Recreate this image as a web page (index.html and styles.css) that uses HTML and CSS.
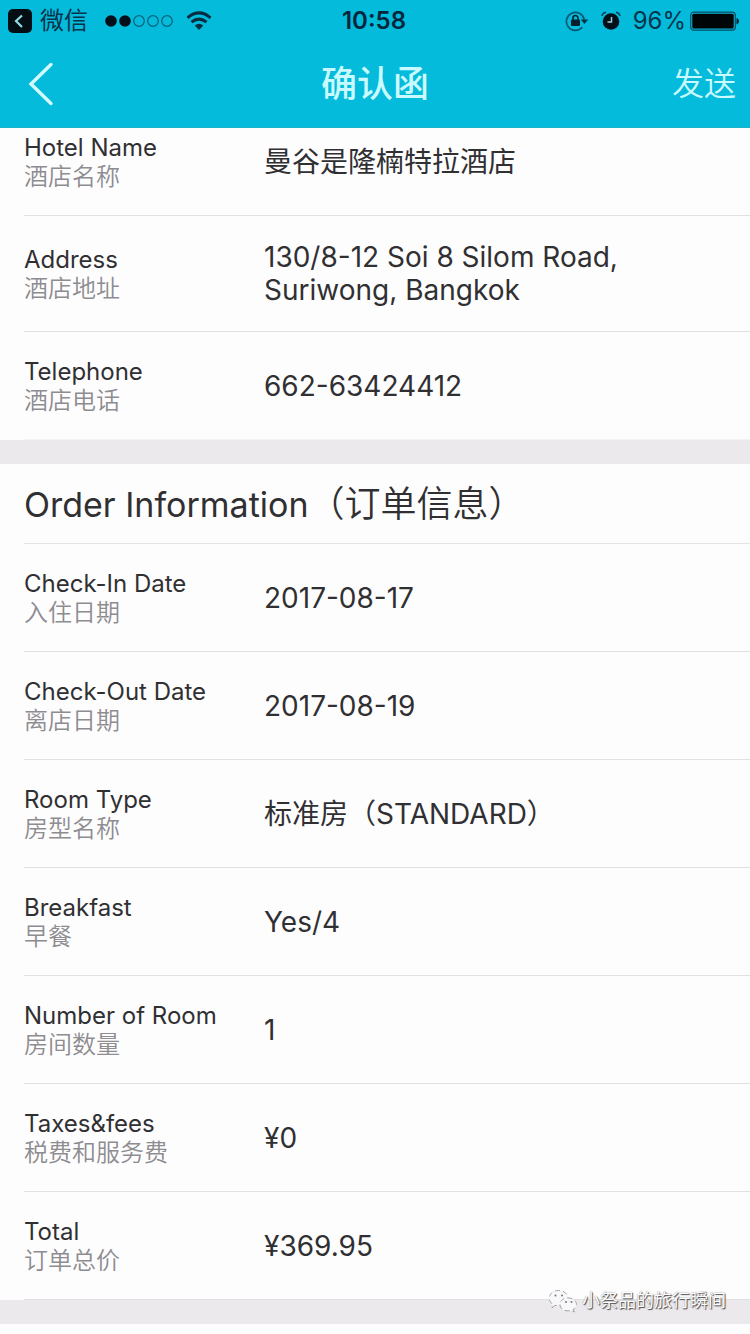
FILE: index.html
```html
<!DOCTYPE html>
<html lang="zh-CN">
<head>
<meta charset="utf-8">
<meta name="viewport" content="width=device-width, initial-scale=1">
<title>确认函</title>
<link rel="stylesheet" href="styles.css">
</head>
<body>
<div class="screen">
  <header class="header">
    <div class="status">
      <div class="status-left">
        <svg class="icon" width="24" height="24" viewBox="0 0 24 24"><rect width="24" height="24" rx="5" fill="#020d14"/><path d="M14 6.500L8 12l6 6" fill="none" stroke="#8fdde2" stroke-width="2.200"/></svg>
        <span class="carrier">微信</span>
        <svg class="icon dots" width="70" height="14" viewBox="0 0 70 14"><g fill="#031019"><circle cx="7" cy="7" r="5.800"/><circle cx="21" cy="7" r="5.800"/></g><g fill="none" stroke="#075f78" stroke-width="1.200"><circle cx="35" cy="7" r="5.300"/><circle cx="49" cy="7" r="5.300"/><circle cx="63" cy="7" r="5.300"/></g></svg>
        <svg class="icon" width="26" height="20" viewBox="0 0 26 20"><g fill="none" stroke="#062c40" stroke-width="3"><path d="M1.500 6.800Q13-3 24.500 6.800"/><path d="M5.500 11.200Q13 5 20.500 11.200"/></g><path d="M8.700 14.600Q13 11 17.300 14.600L13 19z" fill="#062c40"/></svg>
      </div>
      <time class="clock">10:58</time>
      <div class="status-right">
        <svg class="icon" width="24" height="22" viewBox="0 0 24 22"><path d="M17.200 17.300A9 9 0 1 1 19.200 9.500" fill="none" stroke="#075a72" stroke-width="1.700"/><path d="M15.800 9.500h7.400L19.500 14z" fill="#063348"/><rect x="6" y="9.500" width="9" height="6.500" rx="1" fill="#04202f"/><path d="M8 10V8a2.500 2.500 0 0 1 5 0v2" fill="none" stroke="#04202f" stroke-width="1.600"/></svg>
        <svg class="icon alarm" width="20" height="20" viewBox="0 0 20 20"><circle cx="10" cy="10.500" r="8.300" fill="#041019"/><path d="M1 5Q1.500 2 5 1.300M19 5Q18.500 2 15 1.300" fill="none" stroke="#064257" stroke-width="1.500"/><path d="M10.500 6v5H6.500" fill="none" stroke="#9ccfd4" stroke-width="1.500"/></svg>
        <span class="percent">96%</span>
        <svg class="icon" width="50" height="20" viewBox="0 0 50 20"><rect x=".7" y="1.200" width="44.600" height="18" rx="3" fill="none" stroke="#064c62" stroke-width="1.200"/><rect x="2.300" y="2.800" width="41.400" height="14.800" rx="1.500" fill="#000508"/><path d="M46.500 7q2.500.5 2.500 3.200t-2.500 3.200z" fill="#04202f"/></svg>
      </div>
    </div>
    <nav class="nav">
      <button class="back" type="button" aria-label="返回"><svg class="icon" width="26" height="44" viewBox="0 0 26 44"><path d="M23 2.500L3 22l20 19.500" fill="none" stroke="#d2fbff" stroke-width="3.400" stroke-linecap="round"/></svg></button>
      <h1 class="title">确认函</h1>
      <button class="send" type="button">发送</button>
    </nav>
  </header>

  <main class="content">
    <section class="card hotel">
      <dl class="list">
        <div class="row"><dt class="label">Hotel Name<span class="sub">酒店名称</span></dt><dd class="value">曼谷是隆楠特拉酒店</dd></div>
        <div class="row"><dt class="label">Address<span class="sub">酒店地址</span></dt><dd class="value">130/8-12 Soi 8 Silom Road,<br>Suriwong, Bangkok</dd></div>
        <div class="row"><dt class="label">Telephone<span class="sub">酒店电话</span></dt><dd class="value">662-63424412</dd></div>
      </dl>
    </section>
    <section class="card order">
      <h2 class="heading">Order Information<span class="heading-zh">（订单信息）</span></h2>
      <dl class="list">
        <div class="row"><dt class="label">Check-In Date<span class="sub">入住日期</span></dt><dd class="value">2017-08-17</dd></div>
        <div class="row"><dt class="label">Check-Out Date<span class="sub">离店日期</span></dt><dd class="value">2017-08-19</dd></div>
        <div class="row"><dt class="label">Room Type<span class="sub">房型名称</span></dt><dd class="value">标准房（STANDARD）</dd></div>
        <div class="row"><dt class="label">Breakfast<span class="sub">早餐</span></dt><dd class="value">Yes/4</dd></div>
        <div class="row"><dt class="label">Number of Room<span class="sub">房间数量</span></dt><dd class="value">1</dd></div>
        <div class="row"><dt class="label">Taxes&amp;fees<span class="sub">税费和服务费</span></dt><dd class="value">¥0</dd></div>
        <div class="row"><dt class="label">Total<span class="sub">订单总价</span></dt><dd class="value">¥369.95</dd></div>
      </dl>
    </section>
  </main>

  <div class="watermark">
    <svg class="icon" width="30" height="24" viewBox="0 0 30 24"><g fill="#f8f7f9" stroke="#a3a1a5" stroke-width="1" stroke-dasharray="5 3"><path d="M6.500 16.500L4 19l.5-3.800C-1.500 10.500 1.500 1.500 10.500 1.500c5.500 0 9.500 3.500 9.500 7.500 0 5-5 8-11 7.300z"/><path d="M25 20.500l1.500 2.500-3.500-1.500c-6 1.500-11-1.500-11-6 0-4 3.500-6.500 8.300-6.500s8.200 3 8.200 6.500c0 2-1.200 4-3.500 5z"/></g><g fill="#77757a"><circle cx="7.500" cy="6.500" r="1"/><circle cx="14" cy="6.500" r="1"/><circle cx="18" cy="13" r="1"/><circle cx="23.500" cy="13" r="1"/></g></svg>
    <span>小祭品的旅行瞬间</span>
  </div>
</div>
</body>
</html>
```

FILE: styles.css
```css
* {
  box-sizing: border-box;
}

body {
  margin: 0;
  background: #fefdfe;
  color: #303033;
  font-family: Inter, "Noto Sans CJK SC", sans-serif;
}

.screen {
  position: relative;
  padding-bottom: 10px;
}

.icon {
  display: block;
  flex: none;
}

.header {
  position: relative;
  z-index: 1;
  background: #05bbdc;
  border-bottom: 1px solid #22b3c8;
}

.status {
  display: grid;
  grid-template-columns: 1fr auto 1fr;
  align-items: center;
  height: 41px;
  padding: 0 10px 0 8px;
  color: #06344a;
  font-size: 24px;
  line-height: 41px;
}

.status-left {
  display: flex;
  align-items: center;
  gap: 8px;
}

.status-left .dots {
  margin: 0 4px 0 8px;
}

.status-right {
  display: flex;
  align-items: center;
  justify-content: flex-end;
  gap: 4px;
}

.status-right .alarm {
  margin: 0 8px;
}

.clock {
  color: #06263c;
  font-size: 24px;
  font-weight: 600;
}

.nav {
  display: grid;
  grid-template-columns: 1fr auto 1fr;
  align-items: center;
  height: 86px;
  padding: 0 14px;
  color: #c9faff;
}

.title {
  margin: 0;
  font-size: 36px;
  font-weight: 500;
  line-height: 48px;
}

.back,
.send {
  padding: 0;
  border: 0;
  background: none;
  color: inherit;
  font: inherit;
}

.back {
  justify-self: start;
  padding-left: 14px;
}

.send {
  justify-self: end;
  font-size: 32px;
  font-weight: 350;
  line-height: 48px;
}

.content {
  overflow: hidden;
}

.card {
  border-bottom: 24px solid #ebe9ec;
}

/* The list is scrolled a little way under the header. */
.hotel {
  margin-top: -20px;
}

.heading {
  margin: 0 0 0 24px;
  padding: 16px 0 14px;
  border-bottom: 1px solid #e4e3e5;
  font-size: 34px;
  font-weight: 400;
  line-height: 48px;
}

.heading-zh {
  font-size: 36px;
  font-weight: 350;
}

.list {
  margin: 0;
  padding-left: 24px;
}

.row {
  display: grid;
  grid-template-columns: 240px 1fr;
  align-items: center;
  padding: 25px 24px 24px 0;
  border-bottom: 1px solid #e1e0e2;
}

.hotel .row:last-child {
  border-bottom-color: #f3f2f4;
}

.label {
  font-size: 24px;
  line-height: 29px;
}

.sub {
  display: block;
  color: #8d8c90;
  font-weight: 350;
}

.value {
  margin: 0;
  font-size: 28px;
  line-height: 33px;
}

.watermark {
  position: absolute;
  right: 24px;
  bottom: 20px;
  display: flex;
  align-items: center;
  gap: 4px;
  color: #fff;
  font-size: 18px;
  line-height: 26px;
  text-shadow: 1px 1px 1px #4a484c, 0 0 1px #77757a;
}
```
